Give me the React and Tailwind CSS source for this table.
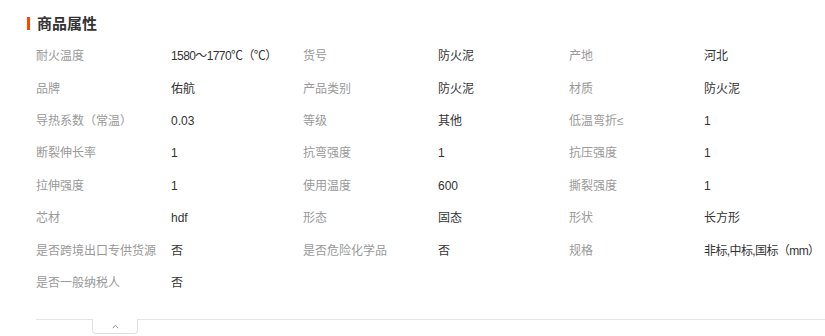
import React from "react";

const rows = [
  ["耐火温度", "1580～1770℃（℃）", "货号", "防火泥", "产地", "河北"],
  ["品牌", "佑航", "产品类别", "防火泥", "材质", "防火泥"],
  ["导热系数（常温）", "0.03", "等级", "其他", "低温弯折≤", "1"],
  ["断裂伸长率", "1", "抗弯强度", "1", "抗压强度", "1"],
  ["拉伸强度", "1", "使用温度", "600", "撕裂强度", "1"],
  ["芯材", "hdf", "形态", "固态", "形状", "长方形"],
  ["是否跨境出口专供货源", "否", "是否危险化学品", "否", "规格", "非标,中标,国标（mm）"],
  ["是否一般纳税人", "否"],
];

const App = () => {
  return (
    <div
      className="w-[825px] h-[336px] overflow-hidden bg-white text-[#333]"
      style={{ fontFamily: '"Liberation Sans", "Noto Sans CJK SC", sans-serif' }}
    >
      <div className="flex pl-[27px] pt-[16px] h-[40px] items-start">
        <span className="w-[3px] h-[13px] bg-[#ff4400] mr-[7px] mt-[1px]"></span>
        <h2 className="text-[15px] font-bold leading-[15px]">商品属性</h2>
      </div>

      <div className="pl-[36px] text-[12px]">
        {rows.map((r, i) => (
          <div key={i} className="grid grid-cols-[267px_266px_256px] h-[32.4px] items-center">
            {[0, 2, 4].map((j) =>
              r[j] ? (
                <div key={j} className="flex min-w-0">
                  <span className="w-[135px] shrink-0 text-[#999] whitespace-nowrap">{r[j]}</span>
                  <span
                    className={
                      r[j + 1].length > 10
                        ? "min-w-0 text-[#333] whitespace-nowrap tracking-[-0.6px]"
                        : "min-w-0 text-[#333] whitespace-nowrap"
                    }
                  >
                    {r[j + 1]}
                  </span>
                </div>
              ) : (
                <div key={j}></div>
              )
            )}
          </div>
        ))}
      </div>

      <div className="mt-[20px] ml-[36px] border-t border-[#e5e5e5] h-[20px]">
        <div className="ml-[56px] -mt-px w-[46px] h-[15px] border border-t-0 border-[#e0e0e0] rounded-b-[4px] bg-white flex items-center justify-center">
          <svg width="7" height="5" viewBox="0 0 7 5" fill="none">
            <path d="M0.8 4.2 L3.5 1.2 L6.2 4.2" stroke="#999" strokeWidth="1" />
          </svg>
        </div>
      </div>
    </div>
  );
};

export default App;
